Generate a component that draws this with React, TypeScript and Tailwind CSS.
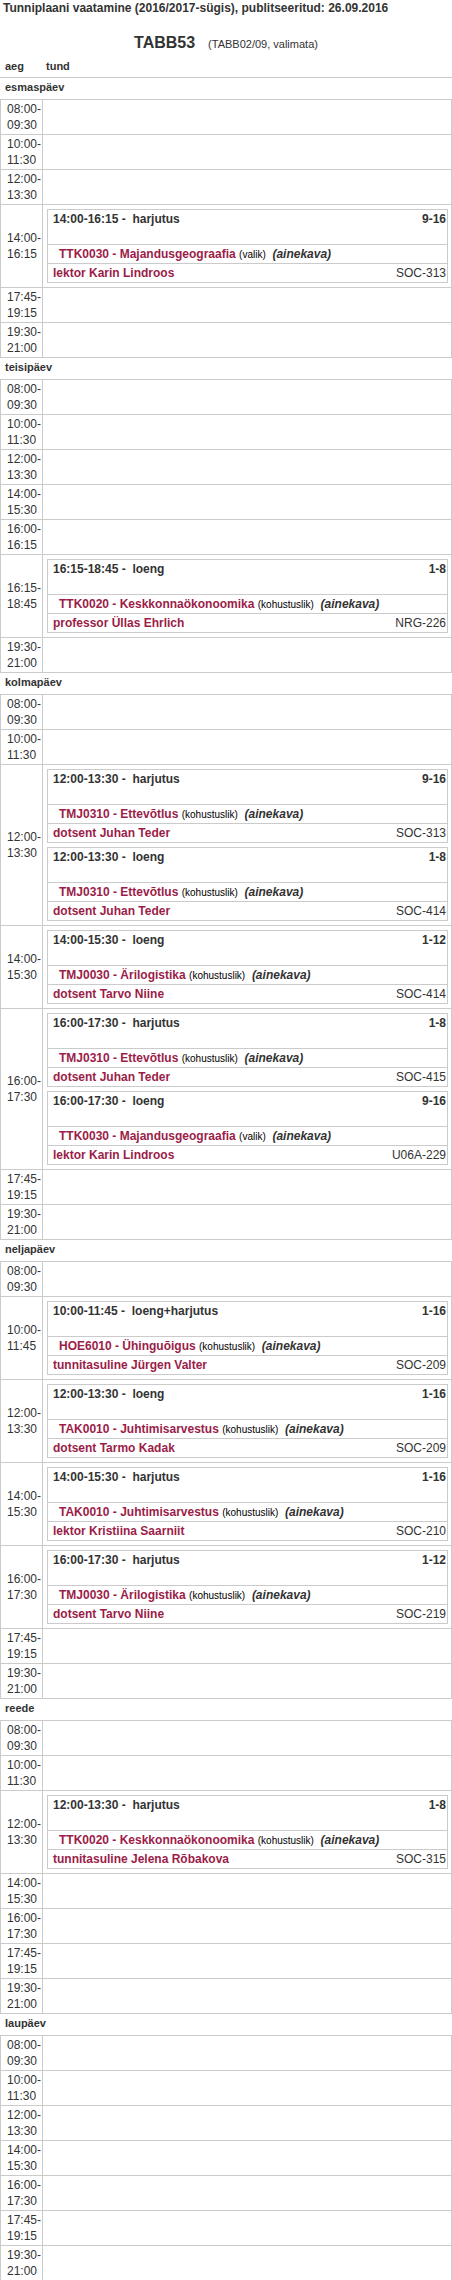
import React from "react";

type Lesson = {
  time: string;
  kind: string;
  weeks: string;
  code: string;
  tag: string;
  teacher: string;
  room: string;
};

type Slot = { from: string; to: string; lessons?: Lesson[] };

type Day = { name: string; slots: Slot[] };

const ettevotlus = "TMJ0310 - Ettevõtlus";
const teder = "dotsent Juhan Teder";

const days: Day[] = [
  {
    name: "esmaspäev",
    slots: [
      { from: "08:00-", to: "09:30" },
      { from: "10:00-", to: "11:30" },
      { from: "12:00-", to: "13:30" },
      {
        from: "14:00-",
        to: "16:15",
        lessons: [
          {
            time: "14:00-16:15",
            kind: "harjutus",
            weeks: "9-16",
            code: "TTK0030 - Majandusgeograafia",
            tag: "(valik)",
            teacher: "lektor Karin Lindroos",
            room: "SOC-313",
          },
        ],
      },
      { from: "17:45-", to: "19:15" },
      { from: "19:30-", to: "21:00" },
    ],
  },
  {
    name: "teisipäev",
    slots: [
      { from: "08:00-", to: "09:30" },
      { from: "10:00-", to: "11:30" },
      { from: "12:00-", to: "13:30" },
      { from: "14:00-", to: "15:30" },
      { from: "16:00-", to: "16:15" },
      {
        from: "16:15-",
        to: "18:45",
        lessons: [
          {
            time: "16:15-18:45",
            kind: "loeng",
            weeks: "1-8",
            code: "TTK0020 - Keskkonnaökonoomika",
            tag: "(kohustuslik)",
            teacher: "professor Üllas Ehrlich",
            room: "NRG-226",
          },
        ],
      },
      { from: "19:30-", to: "21:00" },
    ],
  },
  {
    name: "kolmapäev",
    slots: [
      { from: "08:00-", to: "09:30" },
      { from: "10:00-", to: "11:30" },
      {
        from: "12:00-",
        to: "13:30",
        lessons: [
          {
            time: "12:00-13:30",
            kind: "harjutus",
            weeks: "9-16",
            code: ettevotlus,
            tag: "(kohustuslik)",
            teacher: teder,
            room: "SOC-313",
          },
          {
            time: "12:00-13:30",
            kind: "loeng",
            weeks: "1-8",
            code: ettevotlus,
            tag: "(kohustuslik)",
            teacher: teder,
            room: "SOC-414",
          },
        ],
      },
      {
        from: "14:00-",
        to: "15:30",
        lessons: [
          {
            time: "14:00-15:30",
            kind: "loeng",
            weeks: "1-12",
            code: "TMJ0030 - Ärilogistika",
            tag: "(kohustuslik)",
            teacher: "dotsent Tarvo Niine",
            room: "SOC-414",
          },
        ],
      },
      {
        from: "16:00-",
        to: "17:30",
        lessons: [
          {
            time: "16:00-17:30",
            kind: "harjutus",
            weeks: "1-8",
            code: ettevotlus,
            tag: "(kohustuslik)",
            teacher: teder,
            room: "SOC-415",
          },
          {
            time: "16:00-17:30",
            kind: "loeng",
            weeks: "9-16",
            code: "TTK0030 - Majandusgeograafia",
            tag: "(valik)",
            teacher: "lektor Karin Lindroos",
            room: "U06A-229",
          },
        ],
      },
      { from: "17:45-", to: "19:15" },
      { from: "19:30-", to: "21:00" },
    ],
  },
  {
    name: "neljapäev",
    slots: [
      { from: "08:00-", to: "09:30" },
      {
        from: "10:00-",
        to: "11:45",
        lessons: [
          {
            time: "10:00-11:45",
            kind: "loeng+harjutus",
            weeks: "1-16",
            code: "HOE6010 - Ühinguõigus",
            tag: "(kohustuslik)",
            teacher: "tunnitasuline Jürgen Valter",
            room: "SOC-209",
          },
        ],
      },
      {
        from: "12:00-",
        to: "13:30",
        lessons: [
          {
            time: "12:00-13:30",
            kind: "loeng",
            weeks: "1-16",
            code: "TAK0010 - Juhtimisarvestus",
            tag: "(kohustuslik)",
            teacher: "dotsent Tarmo Kadak",
            room: "SOC-209",
          },
        ],
      },
      {
        from: "14:00-",
        to: "15:30",
        lessons: [
          {
            time: "14:00-15:30",
            kind: "harjutus",
            weeks: "1-16",
            code: "TAK0010 - Juhtimisarvestus",
            tag: "(kohustuslik)",
            teacher: "lektor Kristiina Saarniit",
            room: "SOC-210",
          },
        ],
      },
      {
        from: "16:00-",
        to: "17:30",
        lessons: [
          {
            time: "16:00-17:30",
            kind: "harjutus",
            weeks: "1-12",
            code: "TMJ0030 - Ärilogistika",
            tag: "(kohustuslik)",
            teacher: "dotsent Tarvo Niine",
            room: "SOC-219",
          },
        ],
      },
      { from: "17:45-", to: "19:15" },
      { from: "19:30-", to: "21:00" },
    ],
  },
  {
    name: "reede",
    slots: [
      { from: "08:00-", to: "09:30" },
      { from: "10:00-", to: "11:30" },
      {
        from: "12:00-",
        to: "13:30",
        lessons: [
          {
            time: "12:00-13:30",
            kind: "harjutus",
            weeks: "1-8",
            code: "TTK0020 - Keskkonnaökonoomika",
            tag: "(kohustuslik)",
            teacher: "tunnitasuline Jelena Rõbakova",
            room: "SOC-315",
          },
        ],
      },
      { from: "14:00-", to: "15:30" },
      { from: "16:00-", to: "17:30" },
      { from: "17:45-", to: "19:15" },
      { from: "19:30-", to: "21:00" },
    ],
  },
  {
    name: "laupäev",
    slots: [
      { from: "08:00-", to: "09:30" },
      { from: "10:00-", to: "11:30" },
      { from: "12:00-", to: "13:30" },
      { from: "14:00-", to: "15:30" },
      { from: "16:00-", to: "17:30" },
      { from: "17:45-", to: "19:15" },
      { from: "19:30-", to: "21:00" },
    ],
  },
];

const LessonBox = ({ lesson }: { lesson: Lesson }) => {
  return (
    <div className="border border-[#cbcbcb] text-[12px]">
      <div className="flex h-[34px] justify-between pl-[5px] pr-[1px] pt-[1px] font-bold leading-[16px] text-[#333]">
        <span>
          {lesson.time} -{"\u00a0 "}
          {lesson.kind}
        </span>
        <span>{lesson.weeks}</span>
      </div>
      <div className="h-[19px] border-t border-[#cbcbcb] pl-[11px] leading-[18px]">
        <span className="font-bold text-[#9b1d48]">{lesson.code}</span>{" "}
        <span className="text-[10px] text-black">{lesson.tag}</span>
        {"\u00a0 "}
        <span className="font-bold italic text-[#333]">(ainekava)</span>
      </div>
      <div className="flex h-[19px] justify-between border-t border-[#cbcbcb] pl-[5px] pr-[1px] leading-[18px]">
        <span className="font-bold text-[#9b1d48]">{lesson.teacher}</span>
        <span className="text-[#333]">{lesson.room}</span>
      </div>
    </div>
  );
};

const SlotRow = ({ slot }: { slot: Slot }) => {
  return (
    <div className="flex">
      <div className="flex w-[42px] shrink-0 items-center border-r border-[#cbcbcb] py-[1px] pl-[6px] text-[12px] leading-[16px] text-[#333]">
        <div>
          {slot.from}
          <br />
          {slot.to}
        </div>
      </div>
      {slot.lessons ? (
        <div className="flex flex-1 flex-col gap-[4px] pb-[4px] pl-[4px] pr-[3px] pt-[4px]">
          {slot.lessons.map((l, i) => (
            <LessonBox key={i} lesson={l} />
          ))}
        </div>
      ) : (
        <div className="flex-1" />
      )}
    </div>
  );
};

export default function App() {
  return (
    <div
      className="w-[452px] bg-white text-[#333]"
      style={{ fontFamily: '"Liberation Sans", Arial, sans-serif' }}
    >
      <div className="pl-[3px] text-[12px] font-bold leading-[16px]">
        Tunniplaani vaatamine (2016/2017-sügis), publitseeritud: 26.09.2016
      </div>
      <div className="mt-[17px] flex items-baseline justify-center leading-[20px]">
        <span className="text-[16px] font-bold">TABB53</span>
        <span className="ml-[13px] text-[11px]">(TABB02/09, valimata)</span>
      </div>
      <div className="mt-[5px] flex border-b border-[#cbcbcb] pb-[4px] text-[11px] font-bold leading-[14px]">
        <span className="w-[42px] pl-[5px]">aeg</span>
        <span className="pl-[4px]">tund</span>
      </div>
      {days.map((day) => (
        <div key={day.name}>
          <div className="h-[21px] pl-[5px] text-[11px] font-bold leading-[18px]">
            {day.name}
          </div>
          <div className="divide-y divide-[#cbcbcb] border border-[#cbcbcb]">
            {day.slots.map((s, i) => (
              <SlotRow key={i} slot={s} />
            ))}
          </div>
        </div>
      ))}
    </div>
  );
}
